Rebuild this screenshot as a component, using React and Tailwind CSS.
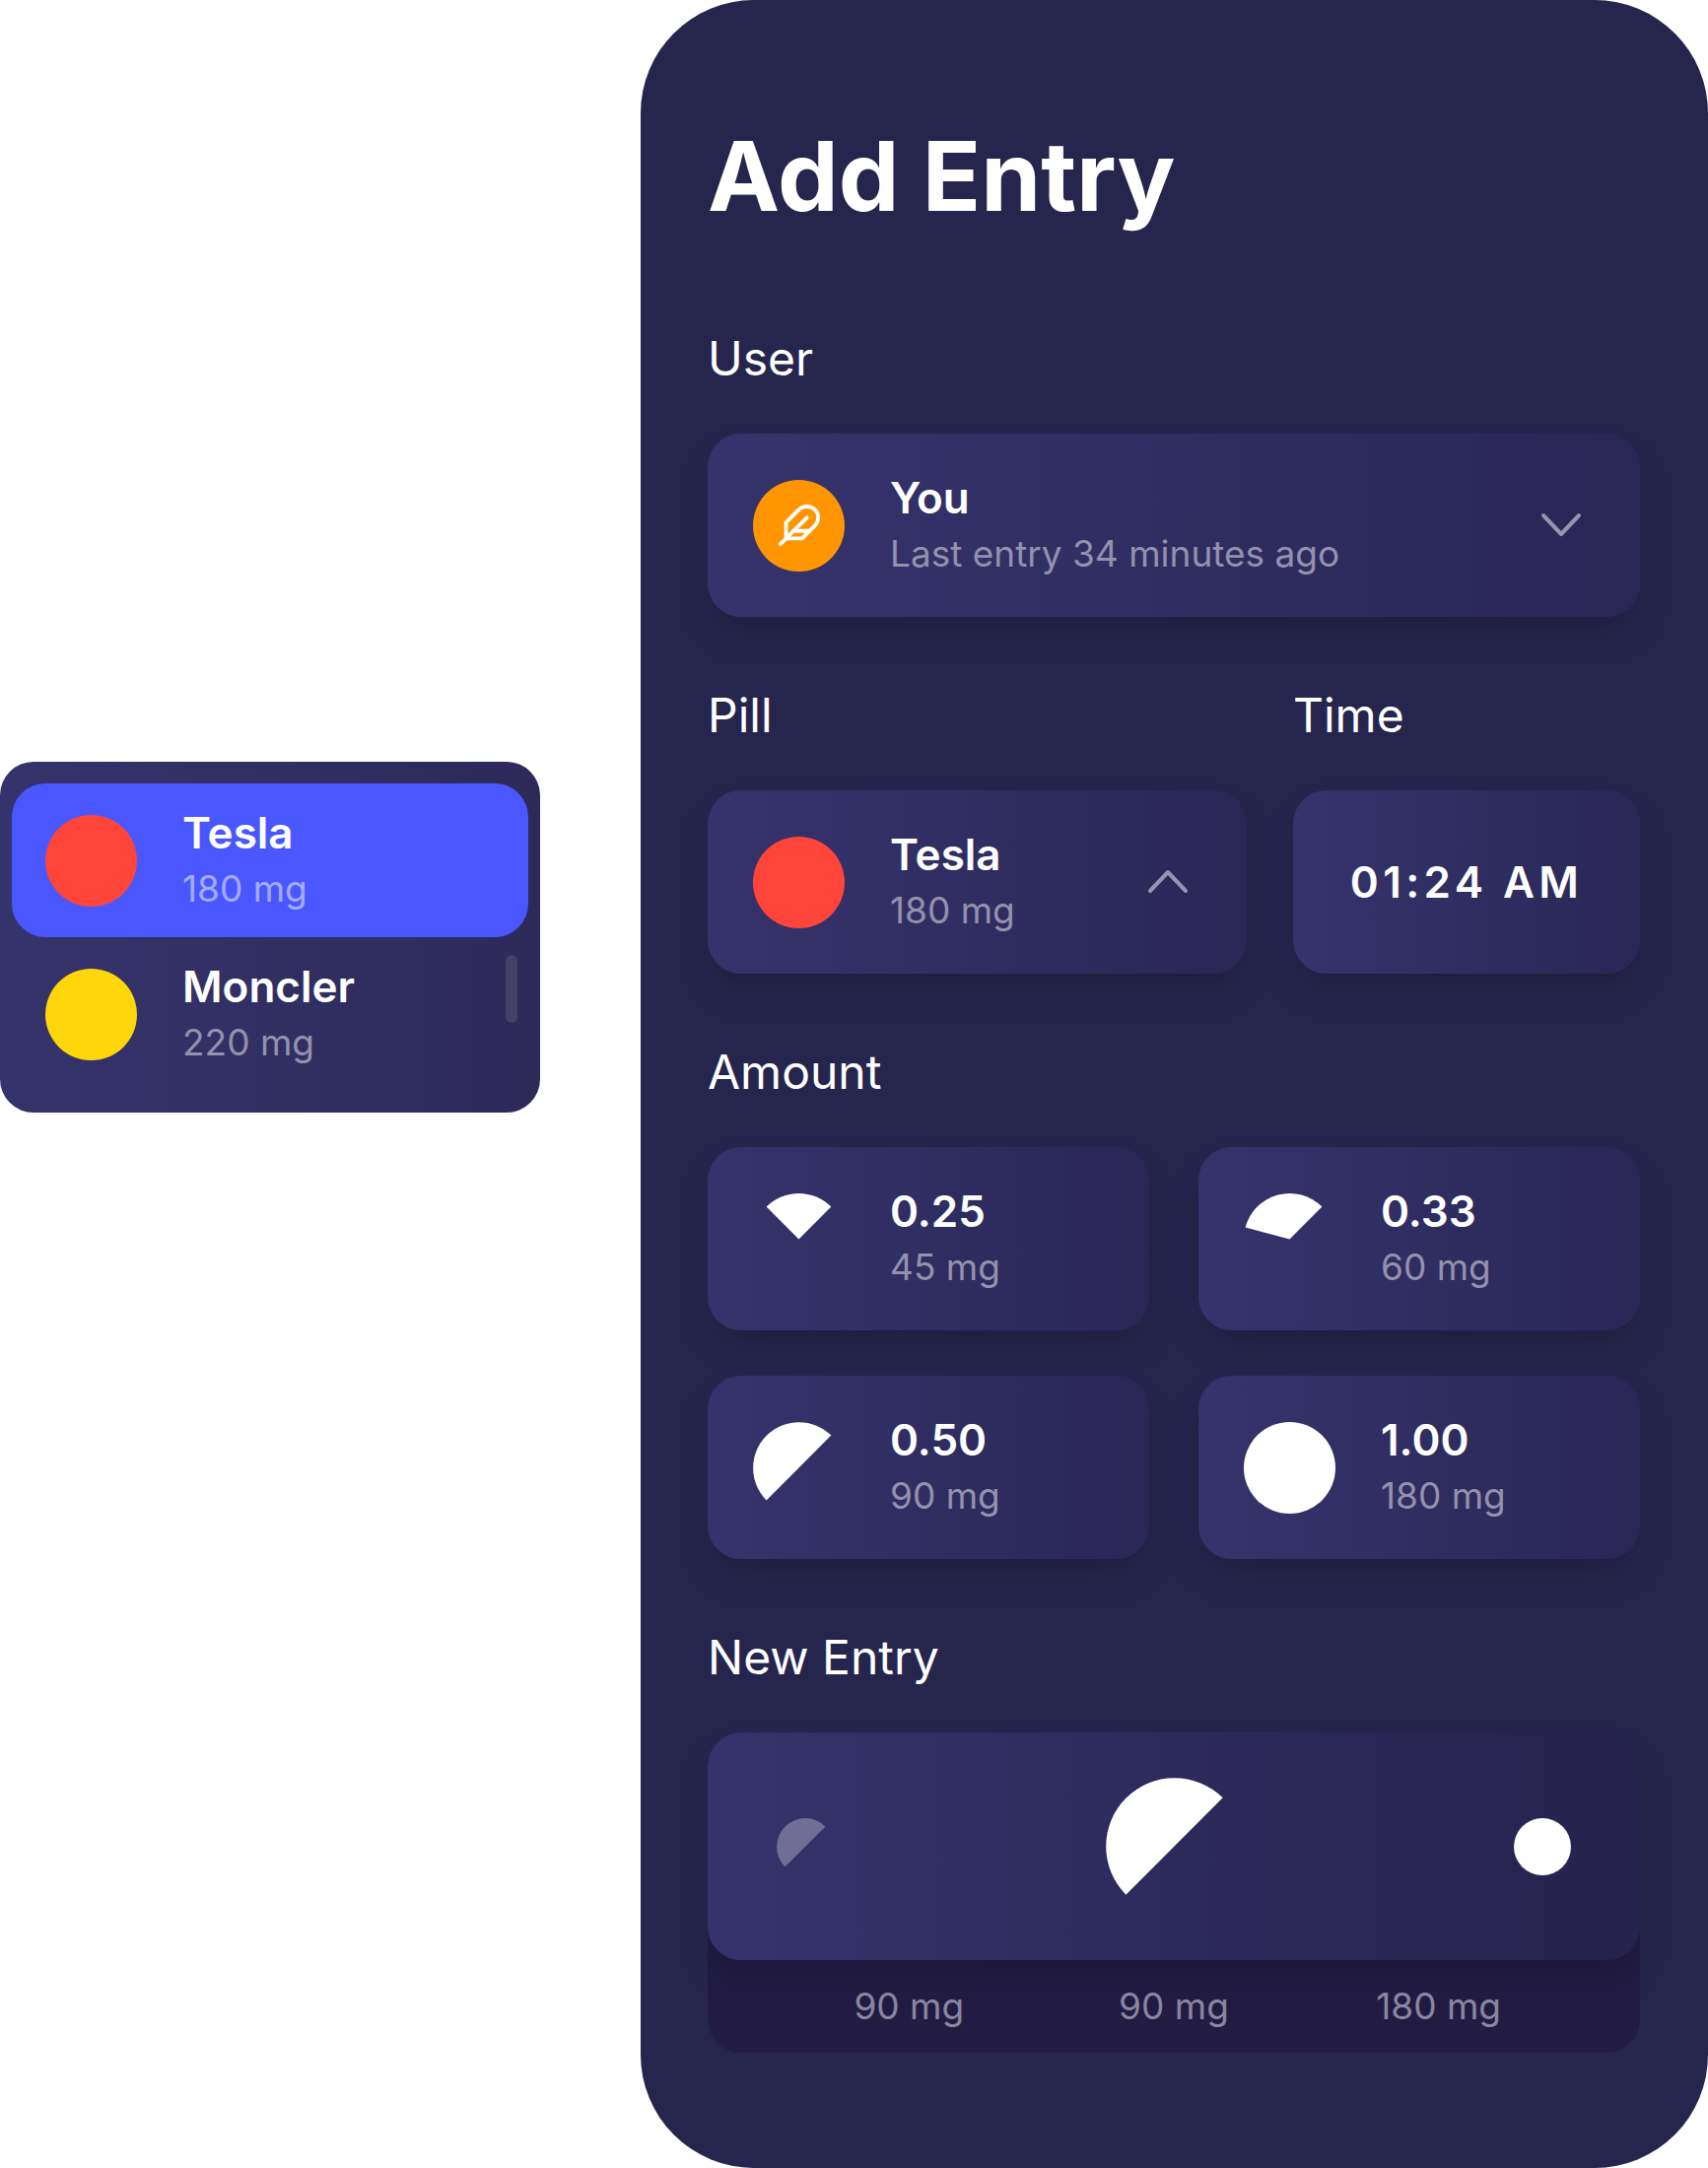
import { useState } from "react";

const CARD =
  "rounded-[34px] bg-linear-to-r from-[#35336b] to-[#2a2757] shadow-[0_20px_32px_rgba(0,0,0,0.16)]";

function point(angle, r) {
  const rad = (angle * Math.PI) / 180;
  return `${(50 + r * Math.sin(rad)).toFixed(3)} ${(50 - r * Math.cos(rad)).toFixed(3)}`;
}

// Pill slice that starts at 45 degrees and runs counter-clockwise.
function Slice({ fraction, className }) {
  return (
    <svg viewBox="0 0 100 100" className={className} fill="currentColor" aria-hidden="true">
      {fraction >= 1 ? (
        <circle cx="50" cy="50" r="50" />
      ) : (
        <path d={`M50 50L${point(45, 50)}A50 50 0 0 0 ${point(45 - 360 * fraction, 50)}Z`} />
      )}
    </svg>
  );
}

function Chevron({ up }) {
  return (
    <svg
      viewBox="0 0 72 72"
      className="size-[72px] shrink-0 text-[#9694b0]"
      fill="none"
      stroke="currentColor"
      strokeWidth="4"
      strokeLinecap="round"
      strokeLinejoin="round"
      aria-hidden="true"
    >
      <path d={up ? "M18 45l18-19 18 19" : "M18 26l18 19 18-19"} />
    </svg>
  );
}

function Feather() {
  return (
    <svg
      viewBox="0 0 24 24"
      className="size-[46px]"
      fill="none"
      stroke="currentColor"
      strokeWidth="2"
      strokeLinecap="round"
      strokeLinejoin="round"
      aria-hidden="true"
    >
      <path d="M20.24 12.24a6 6 0 0 0-8.49-8.49L5 10.5V19h8.5z" />
      <path d="M16 8L2 22" />
      <path d="M17.5 15H9" />
    </svg>
  );
}

function Label({ title, detail, muted = "text-[#9391ad]" }) {
  return (
    <span className="flex min-w-0 flex-1 flex-col">
      <span className="text-[44px] leading-[58px] font-semibold text-white">{title}</span>
      <span className={`text-[37px] leading-[56px] ${muted}`}>{detail}</span>
    </span>
  );
}

const HEADING = "mb-[46px] block text-[48px] leading-[60px] font-normal text-white";

const PILLS = [
  { name: "Tesla", dose: "180 mg", color: "bg-[#ff453a]" },
  { name: "Moncler", dose: "220 mg", color: "bg-[#ffd60a]" },
];

const AMOUNTS = [
  { value: "0.25", dose: "45 mg", fraction: 1 / 4 },
  { value: "0.33", dose: "60 mg", fraction: 1 / 3 },
  { value: "0.50", dose: "90 mg", fraction: 1 / 2 },
  { value: "1.00", dose: "180 mg", fraction: 1 },
];

function PillMenu({ selected, onSelect }) {
  return (
    <div
      role="listbox"
      aria-label="Pill"
      className="relative mt-[773px] w-[548px] shrink-0 rounded-[34px] bg-linear-to-r from-[#35336b] to-[#2d2a5a] px-3 py-[22px]"
    >
      {PILLS.map((pill) => {
        const active = pill.name === selected;
        return (
          <button
            key={pill.name}
            type="button"
            role="option"
            aria-selected={active}
            onClick={() => onSelect(pill.name)}
            className={`flex w-full items-center gap-[46px] rounded-[34px] px-[34px] py-[21px] text-left ${active ? "bg-[#4a57ff]" : ""}`}
          >
            <span className={`size-[93px] shrink-0 rounded-full ${pill.color}`} />
            <Label
              title={pill.name}
              detail={pill.dose}
              muted={active ? "text-[#a4abff]" : "text-[#9391ad]"}
            />
          </button>
        );
      })}
      <span className="absolute right-[23px] bottom-[91px] h-[69px] w-3 rounded-full bg-[#444169]" />
    </div>
  );
}

export default function App() {
  const [selected, setSelected] = useState("Tesla");
  const [time, setTime] = useState("01:24 AM");

  return (
    <div className="flex min-h-screen items-start gap-[102px] bg-white font-['Inter',sans-serif]">
      <PillMenu selected={selected} onSelect={setSelected} />

      <main className="min-h-screen flex-1 rounded-[115px] bg-[#26254e] pt-[119px] pr-[69px] pb-[114px] pl-[68px]">
        <h1 className="mb-[95px] text-[98px] leading-[120px] font-bold text-white">Add Entry</h1>

        <section className="mb-[70px]">
          <h2 className={HEADING}>User</h2>
          <button
            type="button"
            aria-haspopup="listbox"
            className={`flex w-full items-center gap-[46px] py-9 pr-11 pl-[46px] text-left ${CARD}`}
          >
            <span className="flex size-[93px] shrink-0 items-center justify-center rounded-full bg-[#ff9500] text-white">
              <Feather />
            </span>
            <Label title="You" detail="Last entry 34 minutes ago" />
            <Chevron />
          </button>
        </section>

        <div className="mb-[70px] flex gap-[47px]">
          <section className="flex-[547]">
            <h2 className={HEADING}>Pill</h2>
            <button
              type="button"
              aria-haspopup="listbox"
              aria-expanded="true"
              className={`flex w-full items-center gap-[46px] py-9 pr-11 pl-[46px] text-left ${CARD}`}
            >
              <span className="size-[93px] shrink-0 rounded-full bg-[#ff453a]" />
              <Label title="Tesla" detail="180 mg" />
              <Chevron up />
            </button>
          </section>
          <section className="flex flex-[352] flex-col">
            <label htmlFor="time" className={HEADING}>Time</label>
            <input
              id="time"
              type="text"
              value={time}
              onChange={(e) => setTime(e.target.value)}
              className={`w-full min-w-0 flex-1 text-center text-[44px] font-semibold tracking-widest text-white ${CARD}`}
            />
          </section>
        </div>

        <section className="mb-[70px]">
          <h2 className={HEADING}>Amount</h2>
          <div className="grid grid-cols-2 gap-x-[50px] gap-y-[46px]">
            {AMOUNTS.map((a) => (
              <button
                key={a.value}
                type="button"
                className={`flex items-center gap-[46px] px-[46px] py-9 text-left ${CARD}`}
              >
                <Slice fraction={a.fraction} className="size-[93px] shrink-0 text-white" />
                <Label title={a.value} detail={a.dose} />
              </button>
            ))}
          </div>
        </section>

        <section>
          <h2 className={HEADING}>New Entry</h2>
          <div className="rounded-[34px] bg-[#221c45]">
            <div className="flex items-center justify-between rounded-[34px] bg-linear-to-r from-[#35336b] to-[#25224d] px-[70px] py-[46px] shadow-[0_20px_32px_rgba(0,0,0,0.16)]">
              <Slice fraction={1 / 2} className="size-[58px] text-[#706e96]" />
              <Slice fraction={1 / 2} className="size-[139px] text-white" />
              <Slice fraction={1} className="size-[58px] text-white" />
            </div>
            <div className="grid grid-cols-3 px-[70px] py-[17px] text-center text-[37px] leading-[60px] text-[#8a869e]">
              <span>90 mg</span>
              <span>90 mg</span>
              <span>180 mg</span>
            </div>
          </div>
        </section>
      </main>
    </div>
  );
}
